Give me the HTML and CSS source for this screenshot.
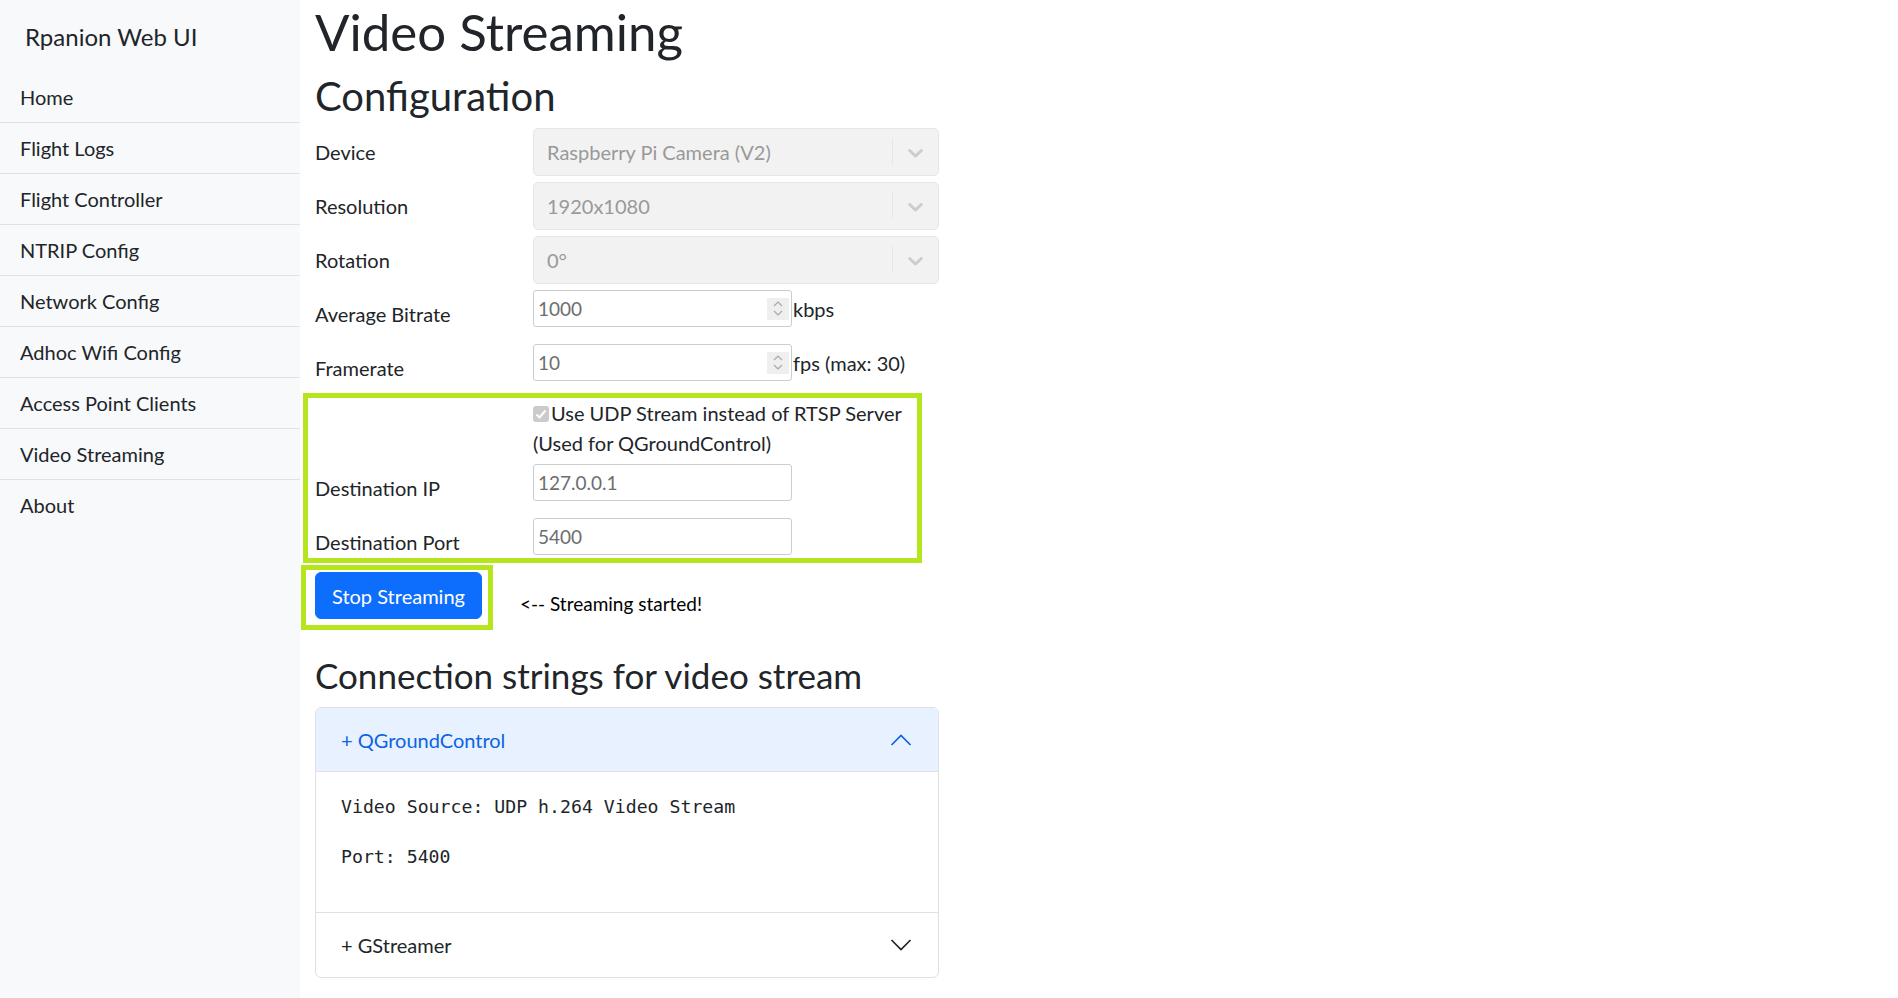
FILE: index.html
```html
<!DOCTYPE html>
<html lang="en">
<head>
<meta charset="utf-8">
<title>Rpanion Web UI - Video Streaming</title>
<link rel="stylesheet" href="styles.css">
</head>
<body>
<div class="app">
  <aside class="sidebar">
    <div class="brand">Rpanion Web UI</div>
    <nav class="nav">
      <a class="nav-item" href="#">Home</a>
      <a class="nav-item" href="#">Flight Logs</a>
      <a class="nav-item" href="#">Flight Controller</a>
      <a class="nav-item" href="#">NTRIP Config</a>
      <a class="nav-item" href="#">Network Config</a>
      <a class="nav-item" href="#">Adhoc Wifi Config</a>
      <a class="nav-item" href="#">Access Point Clients</a>
      <a class="nav-item" href="#">Video Streaming</a>
      <a class="nav-item" href="#">About</a>
    </nav>
  </aside>

  <main class="main">
    <h1 class="title">Video Streaming</h1>
    <h2 class="subtitle">Configuration</h2>

    <form class="config">
      <div class="form-row">
        <label class="form-label">Device</label>
        <div class="form-ctrl">
          <div class="rs-control">
            <div class="rs-value">Raspberry Pi Camera (V2)</div>
            <span class="rs-sep"></span>
            <div class="rs-ind"><svg width="25" height="25" viewBox="0 0 20 20"><path class="rs-chev" d="M4.516 7.548c0.436-0.446 1.043-0.481 1.576 0l3.908 3.747 3.908-3.747c0.533-0.481 1.141-0.446 1.574 0 0.436 0.445 0.408 1.197 0 1.615-0.406 0.418-4.695 4.502-4.695 4.502-0.217 0.223-0.502 0.335-0.787 0.335s-0.57-0.112-0.789-0.335c0 0-4.287-4.084-4.695-4.502s-0.436-1.170 0-1.615z"/></svg></div>
          </div>
        </div>
      </div>

      <div class="form-row">
        <label class="form-label">Resolution</label>
        <div class="form-ctrl">
          <div class="rs-control">
            <div class="rs-value">1920x1080</div>
            <span class="rs-sep"></span>
            <div class="rs-ind"><svg width="25" height="25" viewBox="0 0 20 20"><path class="rs-chev" d="M4.516 7.548c0.436-0.446 1.043-0.481 1.576 0l3.908 3.747 3.908-3.747c0.533-0.481 1.141-0.446 1.574 0 0.436 0.445 0.408 1.197 0 1.615-0.406 0.418-4.695 4.502-4.695 4.502-0.217 0.223-0.502 0.335-0.787 0.335s-0.57-0.112-0.789-0.335c0 0-4.287-4.084-4.695-4.502s-0.436-1.170 0-1.615z"/></svg></div>
          </div>
        </div>
      </div>

      <div class="form-row">
        <label class="form-label">Rotation</label>
        <div class="form-ctrl">
          <div class="rs-control">
            <div class="rs-value">0°</div>
            <span class="rs-sep"></span>
            <div class="rs-ind"><svg width="25" height="25" viewBox="0 0 20 20"><path class="rs-chev" d="M4.516 7.548c0.436-0.446 1.043-0.481 1.576 0l3.908 3.747 3.908-3.747c0.533-0.481 1.141-0.446 1.574 0 0.436 0.445 0.408 1.197 0 1.615-0.406 0.418-4.695 4.502-4.695 4.502-0.217 0.223-0.502 0.335-0.787 0.335s-0.57-0.112-0.789-0.335c0 0-4.287-4.084-4.695-4.502s-0.436-1.170 0-1.615z"/></svg></div>
          </div>
        </div>
      </div>

      <div class="form-row">
        <label class="form-label">Average Bitrate</label>
        <div class="form-ctrl inline">
          <div class="field">
            <input class="field-input" type="text" value="1000" disabled>
            <span class="spin"><svg width="10" height="6" viewBox="0 0 10 6"><polyline points="1,5 5,1 9,5"/></svg><svg width="10" height="6" viewBox="0 0 10 6"><polyline points="1,1 5,5 9,1"/></svg></span>
          </div>
          <span class="unit">kbps</span>
        </div>
      </div>

      <div class="form-row">
        <label class="form-label">Framerate</label>
        <div class="form-ctrl inline">
          <div class="field">
            <input class="field-input" type="text" value="10" disabled>
            <span class="spin"><svg width="10" height="6" viewBox="0 0 10 6"><polyline points="1,5 5,1 9,5"/></svg><svg width="10" height="6" viewBox="0 0 10 6"><polyline points="1,1 5,5 9,1"/></svg></span>
          </div>
          <span class="unit">fps (max: 30)</span>
        </div>
      </div>

      <div class="form-row">
        <span class="form-label empty"></span>
        <div class="form-ctrl">
          <label class="check-text"><span class="cbox"><svg width="16" height="16" viewBox="0 0 16 16"><polyline points="3.5,8.5 6.5,11.5 12.5,4.5"/></svg></span>Use UDP Stream instead of RTSP Server (Used for QGroundControl)</label>
        </div>
      </div>

      <div class="form-row">
        <label class="form-label">Destination IP</label>
        <div class="form-ctrl inline">
          <div class="field">
            <input class="field-input" type="text" value="127.0.0.1" disabled>
          </div>
        </div>
      </div>

      <div class="form-row">
        <label class="form-label">Destination Port</label>
        <div class="form-ctrl inline">
          <div class="field">
            <input class="field-input" type="text" value="5400" disabled>
          </div>
        </div>
      </div>

      <div class="actions">
        <button class="btn" type="button">Stop Streaming</button>
        <span class="status">&lt;-- Streaming started!</span>
      </div>
    </form>

    <h3 class="section-title">Connection strings for video stream</h3>

    <div class="accordion">
      <div class="acc-item open">
        <div class="acc-header">
          <span>+ QGroundControl</span>
          <svg class="acc-chev" width="22" height="12" viewBox="0 0 22 12"><polyline points="1.5,11 11,1.5 20.5,11"/></svg>
        </div>
        <div class="acc-body">
          <p class="mono">Video Source: UDP h.264 Video Stream</p>
          <p class="mono">Port: 5400</p>
        </div>
      </div>
      <div class="acc-item">
        <div class="acc-header">
          <span>+ GStreamer</span>
          <svg class="acc-chev" width="22" height="12" viewBox="0 0 22 12"><polyline points="1.5,1 11,10.5 20.5,1"/></svg>
        </div>
      </div>
    </div>

    <div class="annot annot-form"></div>
    <div class="annot annot-btn"></div>
  </main>
</div>
</body>
</html>
```

FILE: styles.css
```css
html, body {
  margin: 0;
  padding: 0;
}

body {
  font-family: Lato, "Open Sans", sans-serif;
  font-size: 20px;
  line-height: 1.5;
  color: #212529;
  background: #ffffff;
}

.app {
  display: flex;
  min-height: 100vh;
}

/* Sidebar */
.sidebar {
  width: 300px;
  flex: none;
  background: #f8f9fa;
}

.brand {
  font-size: 24px;
  line-height: 36px;
  padding: 19px 25px 17px;
}

.nav {
  display: flex;
  flex-direction: column;
}

.nav-item {
  display: block;
  padding: 10px 20px;
  line-height: 30px;
  color: #212529;
  text-decoration: none;
  border-bottom: 1px solid #dee2e6;
}

.nav-item:last-child {
  border-bottom: none;
}

/* Main */
.main {
  flex: 1;
  position: relative;
  padding-left: 15px;
}

.title {
  font-size: 51px;
  line-height: 60px;
  font-weight: 400;
  margin: 2px 0 10px;
}

.subtitle {
  font-size: 40px;
  line-height: 48px;
  font-weight: 400;
  margin: 0 0 8px;
}

.config {
  width: 624px;
}

.form-row {
  display: flex;
  align-items: flex-start;
  margin-bottom: 6px;
}

.form-label {
  width: 218px;
  flex: none;
  padding: 9px 0;
  line-height: 30px;
}

.form-label.empty {
  padding: 0;
}

.form-ctrl {
  flex: 1;
  min-width: 0;
  display: flex;
}

.form-ctrl.inline {
  align-items: center;
}

/* react-select like disabled control */
.rs-control {
  flex: 1;
  display: flex;
  align-items: center;
  height: 48px;
  box-sizing: border-box;
  background: #f2f2f2;
  border: 1px solid #e6e6e6;
  border-radius: 5px;
}

.rs-value {
  flex: 1;
  padding-left: 13px;
  color: #999999;
  white-space: nowrap;
}

.rs-sep {
  align-self: stretch;
  width: 1px;
  margin: 9px 0 11px;
  background: #e6e6e6;
}

.rs-ind {
  display: flex;
  padding: 0 10px;
}

.rs-chev {
  fill: #cccccc;
}

/* inputs */
.field {
  width: 259px;
  height: 37px;
  box-sizing: border-box;
  border: 1px solid #cdcdcd;
  border-radius: 3px;
  display: flex;
  align-items: center;
  padding: 0 2px 0 4px;
  background: #ffffff;
}

.field-input {
  flex: 1;
  min-width: 0;
  border: 0;
  padding: 0;
  margin: 0;
  background: transparent;
  font-family: Lato, "Open Sans", sans-serif;
  font-size: 19px;
  color: #6d6d6d;
  outline: none;
}

.spin {
  width: 22px;
  height: 22px;
  background: #efefef;
  display: flex;
  flex-direction: column;
  align-items: center;
  justify-content: center;
  gap: 3px;
}

.spin svg {
  display: block;
}

.spin polyline {
  fill: none;
  stroke: #a8a8a8;
  stroke-width: 1.2;
}

.unit {
  padding-left: 1px;
  white-space: nowrap;
}

/* checkbox */
.check-text {
  line-height: 30px;
}

.cbox {
  display: inline-block;
  width: 16px;
  height: 16px;
  margin-right: 2px;
  vertical-align: -1px;
  background: #cbcbcb;
  border-radius: 3px;
}

.cbox svg {
  display: block;
}

.cbox polyline {
  fill: none;
  stroke: #ffffff;
  stroke-width: 2;
}

/* actions */
.actions {
  display: flex;
  align-items: flex-start;
  margin-bottom: 35px;
}

.btn {
  font-family: Lato, "Open Sans", sans-serif;
  font-size: 20px;
  line-height: 30px;
  color: #ffffff;
  background: #0d6efd;
  border: 1px solid #0d6efd;
  border-radius: 6px;
  padding: 7.5px 16px;
  cursor: pointer;
}

.status {
  margin-left: 38px;
  margin-top: 17px;
  font-size: 19px;
  line-height: 30px;
  color: #000000;
}

.section-title {
  font-size: 35px;
  line-height: 42px;
  font-weight: 400;
  margin: 0 0 11px;
}

/* accordion */
.accordion {
  width: 624px;
  box-sizing: border-box;
  border: 1px solid #dee2e6;
  border-radius: 6px;
  overflow: hidden;
}

.acc-item + .acc-item {
  border-top: 1px solid #dee2e6;
}

.acc-header {
  display: flex;
  align-items: center;
  justify-content: space-between;
  height: 64px;
  box-sizing: border-box;
  padding: 0 26px 0 25px;
  color: #212529;
}

.acc-chev {
  display: block;
}

.acc-chev polyline {
  fill: none;
  stroke: #212529;
  stroke-width: 1.7;
}

.acc-item.open .acc-header {
  background: #e7f1ff;
  color: #0c63e4;
  box-shadow: inset 0 -1px 0 #dee2e6;
}

.acc-item.open .acc-chev polyline {
  stroke: #0c63e4;
}

.acc-body {
  padding: 20px 25px;
}

.mono {
  margin: 0 0 20px;
  font-family: "DejaVu Sans Mono", "Liberation Mono", monospace;
  font-size: 18.2px;
  line-height: 30px;
}

/* annotation highlight boxes drawn over the page */
.annot {
  position: absolute;
  box-sizing: border-box;
  border: 5px solid #b5e61d;
  pointer-events: none;
}

.annot-form {
  left: 3px;
  top: 393px;
  width: 619px;
  height: 170px;
}

.annot-btn {
  left: 1px;
  top: 565px;
  width: 192px;
  height: 65px;
}
```
